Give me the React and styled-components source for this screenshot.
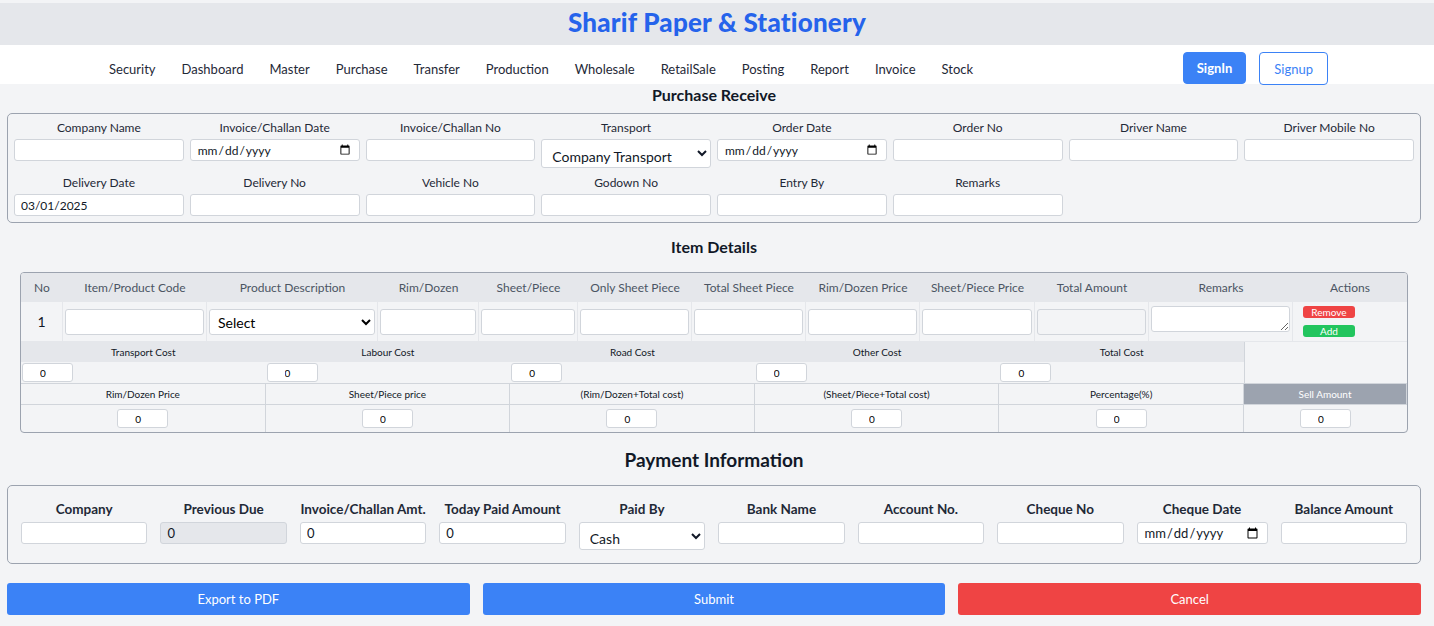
import React from 'react'
import styled, { createGlobalStyle } from 'styled-components'

const GlobalStyle = createGlobalStyle`
  * { box-sizing: border-box; }
  body {
    margin: 0;
    background: #f3f4f6;
    font-family: Lato, "Noto Sans", sans-serif;
    color: #111827;
  }
  input, select, textarea, button { font-family: inherit; }
`

const Page = styled.div`
  padding-top: 3px;
  padding-bottom: 11px;
`

const TitleBar = styled.header`
  height: 42px;
  background: #e5e7eb;
  display: flex;
  align-items: center;
  justify-content: center;
  padding-bottom: 4px;
`

const Title = styled.h1`
  margin: 0;
  font-size: 26px;
  font-weight: 900;
  color: #2563eb;
  letter-spacing: 0.2px;
`

const NavBar = styled.nav`
  height: 39px;
  background: #fff;
  display: flex;
  align-items: flex-start;
  justify-content: space-between;
  padding: 7px 106px 0 109px;
`

const NavLinks = styled.div`
  display: flex;
  gap: 26px;
  padding-top: 9px;
`

const NavLink = styled.a`
  font-size: 13px;
  color: #1f2937;
  cursor: pointer;
`

const AuthGroup = styled.div`
  display: flex;
  gap: 13px;
`

const AuthButton = styled.button`
  height: ${p => (p.$outline ? '33px' : '32px')};
  padding: 0 ${p => (p.$outline ? '14px' : '13px')};
  border-radius: 4px;
  font-size: 13px;
  font-weight: ${p => (p.$outline ? 400 : 700)};
  border: 1px solid #3b82f6;
  background: ${p => (p.$outline ? '#fff' : '#3b82f6')};
  color: ${p => (p.$outline ? '#3b82f6' : '#fff')};
`

const Main = styled.main`
  padding: 0 13px 0 7px;
`

const SectionTitle = styled.h2`
  margin: 0;
  text-align: center;
  font-size: ${p => p.$size || 16}px;
  font-weight: 700;
  color: #111827;
  line-height: ${p => p.$line || 22}px;
  padding: ${p => p.$pad || '0'};
`

const FormBox = styled.section`
  border: 1px solid #9ca3af;
  border-radius: 5px;
  display: grid;
  grid-template-columns: repeat(${p => p.$cols}, 1fr);
  column-gap: ${p => p.$gap}px;
  row-gap: 7px;
  padding: ${p => p.$pad};
  align-items: start;
`

const Field = styled.div`
  display: flex;
  flex-direction: column;
`

const FieldLabel = styled.label`
  text-align: center;
  font-size: ${p => (p.$strong ? 13.5 : 12)}px;
  font-weight: ${p => (p.$strong ? 700 : 400)};
  color: #1f2937;
  line-height: ${p => (p.$strong ? 18 : 16)}px;
  margin-bottom: ${p => (p.$strong ? 4 : 3)}px;
`

const TextInput = styled.input`
  height: 22px;
  width: 100%;
  border: 1px solid #d1d5db;
  border-radius: 3px;
  background: ${p => (p.disabled ? '#e5e7eb' : '#fff')};
  font-size: ${p => p.$fs || 12}px;
  color: #111827;
  padding: 0 6px;
  outline: none;
`

const SelectInput = styled.select`
  height: ${p => p.$h || 29}px;
  width: 100%;
  border: 1px solid #d1d5db;
  border-radius: 3px;
  background: #fff;
  font-size: 14px;
  color: #111827;
  padding: ${p => p.$pt || 5}px 4px 0 6px;
  outline: none;
`

const ItemTable = styled.div`
  margin: 0 13px;
  border: 1px solid #9ca3af;
  border-radius: 4px;
  overflow: hidden;
`

const itemCols = '42px 144px 171px 101px 99px 114px 114px 114px 115px 114px 144px 1fr'

const HeadRow = styled.div`
  display: grid;
  grid-template-columns: ${itemCols};
  height: 29px;
  background: #e5e7eb;
`

const HeadCell = styled.div`
  display: flex;
  align-items: center;
  justify-content: center;
  font-size: 12px;
  color: #4b5563;
`

const DataRow = styled.div`
  display: grid;
  grid-template-columns: ${itemCols};
  height: 40px;
  border-bottom: 1px solid #e5e7eb;
`

const DataCell = styled.div`
  border-right: 1px solid #e5e7eb;
  padding: 4px 2px;
  display: flex;
  align-items: ${p => (p.$top ? 'flex-start' : 'center')};
  justify-content: ${p => (p.$center ? 'center' : 'stretch')};
  font-size: 14px;
  &:last-child { border-right: none; }
`

const CellInput = styled.input`
  width: 100%;
  height: 26px;
  border: 1px solid #d1d5db;
  border-radius: 3px;
  background: ${p => (p.disabled ? '#f3f4f6' : '#fff')};
  outline: none;
`

const CellSelect = styled.select`
  width: 100%;
  height: 26px;
  border: 1px solid #d1d5db;
  border-radius: 3px;
  background: #fff;
  font-size: 14px;
  padding: 2px 2px 0 4px;
  outline: none;
`

const CellArea = styled.textarea`
  width: 100%;
  height: 26px;
  border: 1px solid #d1d5db;
  border-radius: 3px;
  background: #fff;
  outline: none;
  resize: vertical;
`

const ActionStack = styled.div`
  display: flex;
  flex-direction: column;
  gap: 7px;
  padding: 0 0 0 8px;
  align-self: flex-start;
`

const ActionButton = styled.button`
  width: 52px;
  height: 12px;
  border: none;
  border-radius: 3px;
  padding: 0;
  font-size: 10px;
  line-height: 12px;
  color: #fff;
  background: ${p => (p.$kind === 'add' ? '#22c55e' : '#ef4444')};
`

const CostGrid = styled.div`
  display: grid;
  grid-template-columns: repeat(5, 1fr) 163px;
  grid-template-rows: 20px 22px 21px 27px;
`

const CostHead = styled.div`
  background: ${p => (p.$dark ? '#9ca3af' : p.$lined ? 'transparent' : '#e5e7eb')};
  color: ${p => (p.$dark ? '#fff' : '#111827')};
  font-size: 10px;
  display: flex;
  align-items: center;
  justify-content: center;
  border-right: ${p => (p.$lined ? '1px solid #d1d5db' : 'none')};
  border-bottom: ${p => (p.$lined ? '1px solid #d1d5db' : 'none')};
`

const CostBlank = styled.div`
  grid-column: 6;
  grid-row: 1 / span 2;
  border-left: 1px solid #d1d5db;
  border-bottom: 1px solid #d1d5db;
`

const CostCell = styled.div`
  display: flex;
  align-items: center;
  justify-content: ${p => (p.$center ? 'center' : 'flex-start')};
  padding-left: ${p => (p.$center ? 0 : 1)}px;
  border-right: ${p => (p.$lined ? '1px solid #d1d5db' : 'none')};
  border-bottom: ${p => (p.$under ? '1px solid #d1d5db' : 'none')};
`

const SmallInput = styled.input`
  width: 51px;
  height: 19px;
  border: 1px solid #d1d5db;
  border-radius: 3px;
  background: #fff;
  font-size: 10px;
  padding: 0 0 0 17px;
  outline: none;
`

const ButtonRow = styled.div`
  display: grid;
  grid-template-columns: repeat(3, 1fr);
  gap: 13px;
  margin-top: 19px;
`

const WideButton = styled.button`
  height: 32px;
  border: none;
  border-radius: 3px;
  font-size: 13px;
  color: #fff;
  background: ${p => (p.$danger ? '#ef4444' : '#3b82f6')};
`

const navItems = ['Security', 'Dashboard', 'Master', 'Purchase', 'Transfer', 'Production', 'Wholesale', 'RetailSale', 'Posting', 'Report', 'Invoice', 'Stock']

const receiveFields = [
  { label: 'Company Name' },
  { label: 'Invoice/Challan Date', type: 'date' },
  { label: 'Invoice/Challan No' },
  { label: 'Transport', select: ['Company Transport'] },
  { label: 'Order Date', type: 'date' },
  { label: 'Order No' },
  { label: 'Driver Name' },
  { label: 'Driver Mobile No' },
  { label: 'Delivery Date', value: '03/01/2025' },
  { label: 'Delivery No' },
  { label: 'Vehicle No' },
  { label: 'Godown No' },
  { label: 'Entry By' },
  { label: 'Remarks' },
]

const itemHeads = ['No', 'Item/Product Code', 'Product Description', 'Rim/Dozen', 'Sheet/Piece', 'Only Sheet Piece', 'Total Sheet Piece', 'Rim/Dozen Price', 'Sheet/Piece Price', 'Total Amount', 'Remarks', 'Actions']

const costHeads = ['Transport Cost', 'Labour Cost', 'Road Cost', 'Other Cost', 'Total Cost']
const priceHeads = ['Rim/Dozen Price', 'Sheet/Piece price', '(Rim/Dozen+Total cost)', '(Sheet/Piece+Total cost)', 'Percentage(%)', 'Sell Amount']

const paymentFields = [
  { label: 'Company' },
  { label: 'Previous Due', value: '0', disabled: true },
  { label: 'Invoice/Challan Amt.', value: '0' },
  { label: 'Today Paid Amount', value: '0' },
  { label: 'Paid By', select: ['Cash'] },
  { label: 'Bank Name' },
  { label: 'Account No.' },
  { label: 'Cheque No' },
  { label: 'Cheque Date', type: 'date' },
  { label: 'Balance Amount' },
]

const App = () => {
  return (
    <Page>
      <GlobalStyle />
      <TitleBar>
        <Title>Sharif Paper &amp; Stationery</Title>
      </TitleBar>
      <NavBar>
        <NavLinks>
          {navItems.map(n => <NavLink key={n}>{n}</NavLink>)}
        </NavLinks>
        <AuthGroup>
          <AuthButton>SignIn</AuthButton>
          <AuthButton $outline>Signup</AuthButton>
        </AuthGroup>
      </NavBar>

      <Main>
        <SectionTitle $pad="0 0 7px">Purchase Receive</SectionTitle>
        <FormBox $cols={8} $gap={6} $pad="6px 6px 6px">
          {receiveFields.map(f => (
            <Field key={f.label}>
              <FieldLabel>{f.label}</FieldLabel>
              {f.select ? (
                <SelectInput>{f.select.map(o => <option key={o}>{o}</option>)}</SelectInput>
              ) : (
                <TextInput type={f.type || 'text'} defaultValue={f.value} />
              )}
            </Field>
          ))}
        </FormBox>

        <SectionTitle $pad="13px 0 14px">Item Details</SectionTitle>
        <ItemTable>
          <HeadRow>
            {itemHeads.map(h => <HeadCell key={h}>{h}</HeadCell>)}
          </HeadRow>
          <DataRow>
            <DataCell $center>1</DataCell>
            <DataCell><CellInput /></DataCell>
            <DataCell><CellSelect><option>Select</option></CellSelect></DataCell>
            <DataCell><CellInput /></DataCell>
            <DataCell><CellInput /></DataCell>
            <DataCell><CellInput /></DataCell>
            <DataCell><CellInput /></DataCell>
            <DataCell><CellInput /></DataCell>
            <DataCell><CellInput /></DataCell>
            <DataCell><CellInput disabled /></DataCell>
            <DataCell $top><CellArea /></DataCell>
            <DataCell $top>
              <ActionStack>
                <ActionButton>Remove</ActionButton>
                <ActionButton $kind="add">Add</ActionButton>
              </ActionStack>
            </DataCell>
          </DataRow>
          <CostGrid>
            {costHeads.map(h => <CostHead key={h}>{h}</CostHead>)}
            <CostBlank />
            {costHeads.map(h => (
              <CostCell key={h + '-in'} $under>
                <SmallInput defaultValue="0" />
              </CostCell>
            ))}
            {priceHeads.map((h, i) => (
              <CostHead key={h} $lined $dark={i === 5}>{h}</CostHead>
            ))}
            {priceHeads.map((h, i) => (
              <CostCell key={h + '-in'} $center $lined={i < 5}>
                <SmallInput defaultValue="0" />
              </CostCell>
            ))}
          </CostGrid>
        </ItemTable>

        <SectionTitle $size={19} $line={24} $pad="15px 0 13px">Payment Information</SectionTitle>
        <FormBox $cols={10} $gap={13} $pad="14px 13px 13px">
          {paymentFields.map(f => (
            <Field key={f.label}>
              <FieldLabel $strong>{f.label}</FieldLabel>
              {f.select ? (
                <SelectInput $h={28} $pt={4}>{f.select.map(o => <option key={o}>{o}</option>)}</SelectInput>
              ) : (
                <TextInput type={f.type || 'text'} defaultValue={f.value} disabled={f.disabled} $fs={13} />
              )}
            </Field>
          ))}
        </FormBox>

        <ButtonRow>
          <WideButton>Export to PDF</WideButton>
          <WideButton>Submit</WideButton>
          <WideButton $danger>Cancel</WideButton>
        </ButtonRow>
      </Main>
    </Page>
  )
}

export default App
